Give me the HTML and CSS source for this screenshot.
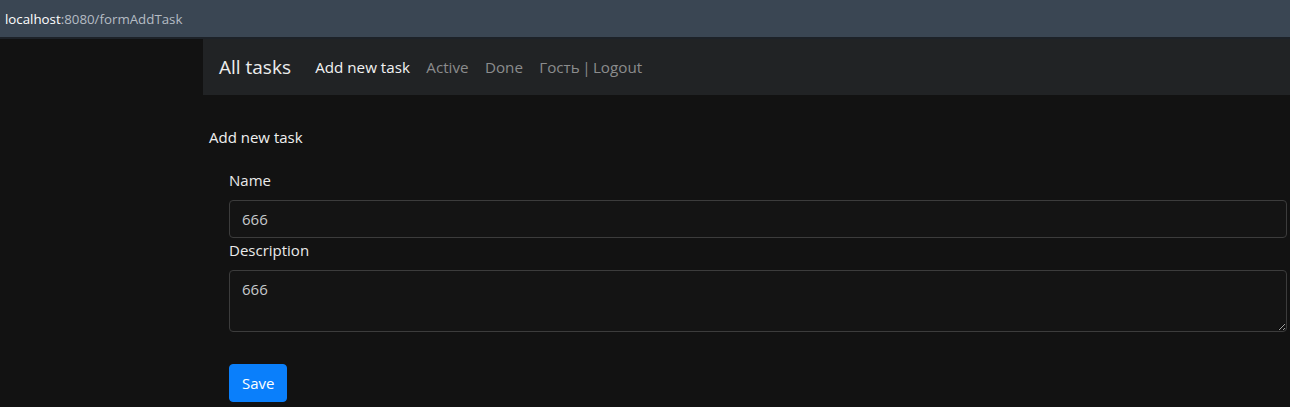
FILE: index.html
```html
<!DOCTYPE html>
<html lang="en">
<head>
<meta charset="utf-8">
<title>Add task</title>
<link rel="stylesheet" href="styles.css">
</head>
<body>
<div class="urlbar"><span class="host">localhost</span><span class="path">:8080/formAddTask</span></div>
<div class="page">
  <nav class="navbar">
    <a class="brand" href="#">All tasks</a>
    <ul class="nav">
      <li><a class="nav-link active" href="#">Add new task</a></li>
      <li><a class="nav-link" href="#">Active</a></li>
      <li><a class="nav-link" href="#">Done</a></li>
      <li><a class="nav-link user" href="#">Гость | Logout</a></li>
    </ul>
  </nav>
  <main class="content">
    <div class="heading">Add new task</div>
    <form class="form">
      <label class="label" for="name">Name</label>
      <input class="control" id="name" type="text" value="666">
      <label class="label" for="desc">Description</label>
      <textarea class="control area" id="desc" rows="2">666</textarea>
      <button class="btn" type="button">Save</button>
    </form>
  </main>
</div>
</body>
</html>
```
FILE: styles.css
```css
* { box-sizing: border-box; }
html, body { margin: 0; padding: 0; }
body {
  background: #121212;
  color: #e9e9e9;
  font-family: "Open Sans", "Noto Sans", sans-serif;
  font-size: 15px;
  line-height: 24px;
  width: 1290px;
  height: 407px;
  overflow: hidden;
  color-scheme: dark;
}
.urlbar {
  height: 39px;
  background: #3a4653;
  border-bottom: 2px solid #1d2228;
  padding: 0 0 0 5px;
  display: flex;
  align-items: center;
  font-size: 13.3px;
}
.host { color: #ffffff; }
.path { color: #b5bcc4; }
.page { padding-left: 203px; }
.navbar {
  display: flex;
  align-items: center;
  background: #212325;
  height: 56px;
  padding: 8px 16px;
}
.brand {
  color: #eceded;
  text-decoration: none;
  font-size: 19px;
  line-height: 30px;
  margin-right: 16px;
}
.nav {
  display: flex;
  list-style: none;
  margin: 0;
  padding: 0;
}
.nav-link {
  display: block;
  padding: 8px 8.2px;
  font-size: 15.2px;
  color: #8b8c8d;
  text-decoration: none;
}
.nav-link.active { color: #f2f2f2; }
.nav-link.user { word-spacing: -1.5px; }
.content { padding: 30px 3px 0 6px; }
.heading { color: #f0f0f0; }
.form {
  display: flex;
  flex-direction: column;
  align-items: flex-start;
  padding: 19px 0 0 20px;
}
.label {
  display: block;
  color: #eaeaea;
  margin-bottom: 8px;
}
.control {
  display: block;
  width: 100%;
  height: 38px;
  padding: 6px 12px;
  font: inherit;
  line-height: 24px;
  color: #c6c9cc;
  background: #141414;
  border: 1px solid #3c3c3c;
  border-radius: 4px;
  margin: 0;
  outline: none;
}
.area {
  height: 62px;
  resize: vertical;
}
.btn {
  margin-top: 32px;
  height: 38px;
  padding: 6px 12px;
  font: inherit;
  line-height: 24px;
  color: #ffffff;
  background: #0a7ffb;
  border: 1px solid #0a7ffb;
  border-radius: 4px;
}
```
